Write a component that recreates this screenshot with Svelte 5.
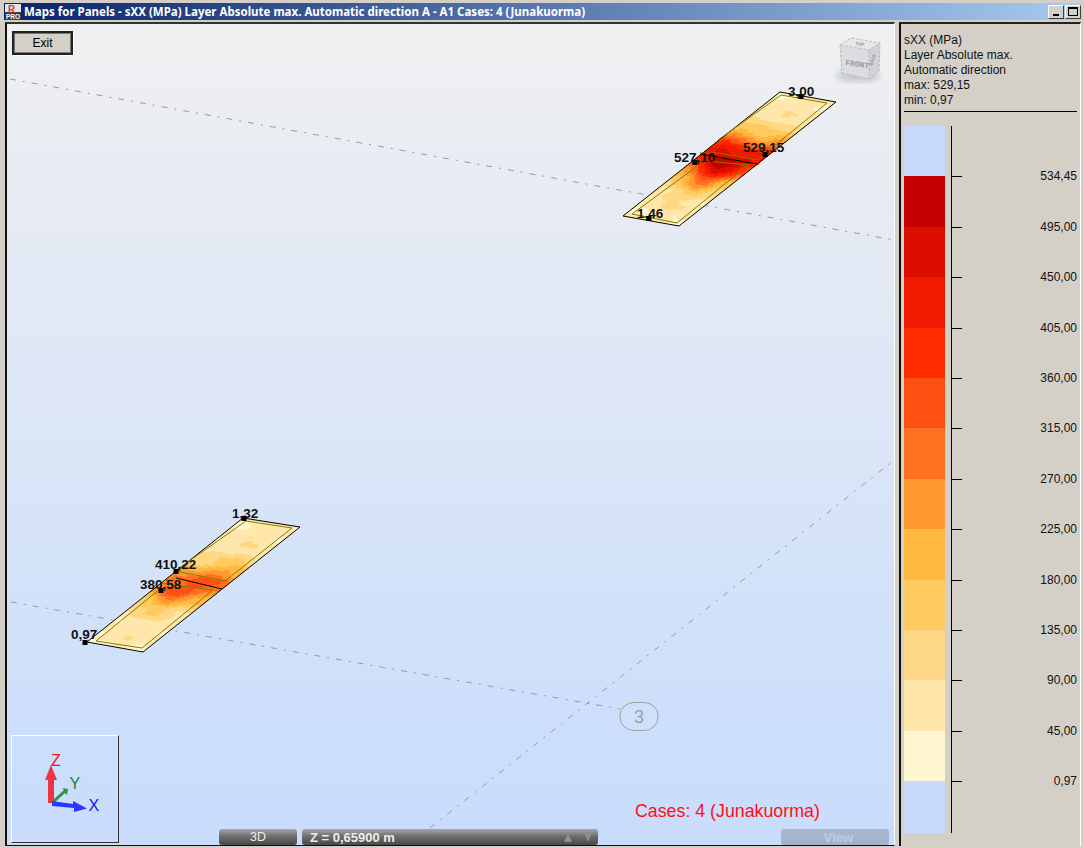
<script>
  const palette = ['#fff6d2','#ffe7ab','#ffd885','#ffca60','#ffb840','#ff9830','#ff7020','#ff5014','#ff2c00','#f21a00','#dd0e00','#c40000'];
  const legend = [
    { color: '#c8dafa', label: '' },
    { color: '#c40000', label: '534,45' },
    { color: '#dd0e00', label: '495,00' },
    { color: '#f21a00', label: '450,00' },
    { color: '#ff2c00', label: '405,00' },
    { color: '#ff5014', label: '360,00' },
    { color: '#ff7020', label: '315,00' },
    { color: '#ff9830', label: '270,00' },
    { color: '#ffb840', label: '225,00' },
    { color: '#ffca60', label: '180,00' },
    { color: '#ffd885', label: '135,00' },
    { color: '#ffe7ab', label: '90,00' },
    { color: '#fff6d2', label: '45,00' },
    { color: '#c8dafa', label: '0,97' }
  ];

  function plate(A, B, C, peak, width, base, seed) {
    const nu = 64, nv = 20, cells = [];
    const pt = (u, v) => [A[0] + u * (B[0] - A[0]) + v * (C[0] - A[0]), A[1] + u * (B[1] - A[1]) + v * (C[1] - A[1])];
    for (let i = 0; i < nu; i++) {
      for (let j = 0; j < nv; j++) {
        const u = (i + 0.5) / nu, v = (j + 0.5) / nv;
        const noise = 0.024 * Math.sin(u * 41 + v * 2.5 + seed) + 0.016 * Math.sin(u * 67 - v * 4 + seed * 2) + 0.008 * Math.sin(u * 23 + v * 13);
        const center = 0.5 + 0.03 * Math.sin(v * 6.28 + seed);
        const d = (u - center) / width;
        const edge = 0.06 * (1 - Math.abs(2 * v - 1));
        const ends = 0.05 * Math.sin(Math.PI * u);
        const x = base + edge + ends + noise + peak * Math.exp(-d * d) * (0.82 + 0.18 * Math.sin(Math.PI * v));
        const level = Math.max(0, Math.min(11, Math.floor(x * 12)));
        const p = [pt(i / nu, j / nv), pt((i + 1) / nu, j / nv), pt((i + 1) / nu, (j + 1) / nv), pt(i / nu, (j + 1) / nv)];
        cells.push({ points: p.map((q) => q.map((n) => n.toFixed(1)).join(',')).join(' '), fill: palette[level] });
      }
    }
    return cells;
  }

  const upper = plate([623, 216], [780, 92], [679, 226], 0.78, 0.18, 0.07, 1.3);
  const lower = plate([87, 642], [243, 518], [143, 652], 0.47, 0.16, 0.07, 2.7);

  const labels = [
    { x: 788, y: 96, t: '3,00' }, { x: 674, y: 162, t: '527,10' }, { x: 743, y: 152, t: '529,15' }, { x: 637, y: 218, t: '1,46' },
    { x: 232, y: 518, t: '1,32' }, { x: 155, y: 569, t: '410,22' }, { x: 140, y: 589, t: '380,58' }, { x: 71, y: 639, t: '0,97' }
  ];
  const marks = [[801, 96], [695, 162], [765, 154], [649, 218], [244, 518], [176, 571], [161, 590], [85, 642]];
</script>

<div class="window">
  <header class="titlebar">
    <svg class="appicon" viewBox="0 0 16 16" width="16" height="16" aria-hidden="true">
      <rect width="16" height="16" fill="#e4e6ee"/>
      <rect x="0" y="8" width="16" height="8" fill="#3c3c44"/>
      <text x="3" y="8.5" class="ico-r">R</text>
      <text x="1" y="15" class="ico-p">PRO</text>
    </svg>
    <span class="title">Maps for Panels - sXX (MPa) Layer Absolute max. Automatic direction A - A1 Cases: 4 (Junakuorma)</span>
    <div class="winbtns">
      <button class="winbtn" aria-label="Minimize"><i class="min"></i></button>
      <button class="winbtn" aria-label="Maximize"><i class="max"></i></button>
    </div>
  </header>

  <main class="body">
    <section class="viewport">
      <svg class="scene" viewBox="7 24 887 821" width="887" height="821">
        <defs>
          <filter id="blur"><feGaussianBlur stdDeviation="3"/></filter>
        </defs>
        <g class="grid">
          <line x1="10" y1="79" x2="894" y2="240"/>
          <line x1="11" y1="602" x2="620" y2="709"/>
          <line x1="430" y1="828" x2="893" y2="461"/>
        </g>
        <rect x="620" y="702.5" width="38" height="28" rx="14" ry="13" fill="#cfe0fb" stroke="#a0a09c"/>
        <text x="639" y="723" class="bubble">3</text>

        <g shape-rendering="crispEdges">
          {#each upper as c}<polygon points={c.points} fill={c.fill} stroke={c.fill} stroke-width="0.6"/>{/each}
          {#each lower as c}<polygon points={c.points} fill={c.fill} stroke={c.fill} stroke-width="0.6"/>{/each}
        </g>

        <polygon class="outline" points="780,92 836,102 679,226 623,216"/>
        <polyline class="inner" points="718,140 781,95 827,103 757,160 718,153 700,153"/>
        <polyline class="inner" points="696,167 632,214 677,223 748,165 696,160"/>
        <line class="centre" x1="700" y1="154" x2="757" y2="164"/>

        <polygon class="outline" points="243,518 300,527 143,652 87,642"/>
        <polyline class="inner" points="175,571 246,521 292,528 225,581 175,571"/>
        <polyline class="inner" points="160,589 96,641 142,648 213,590 160,583"/>
        <line class="centre" x1="176" y1="578" x2="222" y2="589"/>

        {#each marks as m}<rect x={m[0] - 2.5} y={m[1] - 2} width="5" height="5" fill="#000"/>{/each}
        {#each labels as l}<text x={l.x} y={l.y} class="value">{l.t}</text>{/each}

        <g class="cube">
          <ellipse cx="858" cy="76" rx="22" ry="6" fill="#c4c8ce" filter="url(#blur)"/>
          <polygon points="840,45 851,38 880,43 869,50" fill="#e6e7ea"/>
          <polygon points="840,45 869,50 869,79 842,73" fill="#dcdde0"/>
          <polygon points="869,50 880,43 879,71 869,79" fill="#d2d3d7"/>
          <polyline points="840,45 851,38 880,43 869,50 840,45 842,73 869,79 879,71 880,43" fill="none" stroke="#b9babd" stroke-dasharray="3 1.5"/>
          <line x1="869" y1="50" x2="869" y2="79" stroke="#b9babd" stroke-dasharray="3 1.5"/>
          <text x="845" y="65" class="front" transform="rotate(8 845 65)">FRONT</text>
          <text x="872" y="66" class="side" transform="rotate(-70 872 66)">BACK</text>
          <text x="855" y="45" class="side" transform="rotate(8 855 45)">TOP</text>
        </g>

        <text x="635" y="817" class="cases">Cases: 4 (Junakuorma)</text>
      </svg>

      <button class="exit">Exit</button>

      <div class="gizmo">
        <svg viewBox="12 736 106 106" width="106" height="106">
          <polygon points="48,803 48,780 45,780 51,765 57,780 54,780 54,803" fill="#f03442"/>
          <polygon points="53,804 52,801 64,790 62,788 68,789 67,795 65,793" fill="#2f9440"/>
          <polygon points="52,801 73,804 73,801 87,808.5 74,812 74,808 52,806" fill="#2a38ff"/>
          <text x="51" y="765.5" class="gz" fill="#ff1010">Z</text>
          <text x="69.5" y="789" class="gz" fill="#108a30">Y</text>
          <text x="88.5" y="810.5" class="gz" fill="#1018ff">X</text>
        </svg>
      </div>

      <div class="toolbar">
        <button class="bar b3d">3D</button>
        <div class="bar bz">
          <span>Z = 0,65900 m</span>
          <i class="tri up"></i>
          <i class="tri down"></i>
        </div>
        <button class="bar bview">View</button>
      </div>
    </section>

    <aside class="panel">
      <div class="info">
        <div>sXX (MPa)</div>
        <div>Layer Absolute max.</div>
        <div>Automatic direction</div>
        <div>max: 529,15</div>
        <div>min: 0,97</div>
      </div>
      <div class="legend">
        {#each legend as row, i}
          <div class="row">
            <span class="swatch" style:background={row.color}></span>
            <span class="axis">{#if i > 0}<i class="tick"></i>{/if}</span>
            <span class="lab">{row.label}</span>
          </div>
        {/each}
      </div>
    </aside>
  </main>
</div>

<style>
  :global(body) { margin: 0; background: #d4d0c8; overflow: hidden; }
  .window { width: 1084px; height: 848px; background: #d4d0c8; display: flex; flex-direction: column; box-sizing: border-box; font-family: "Liberation Sans", Arial, sans-serif; overflow: hidden; }

  .titlebar { height: 17px; margin: 3px 3px 0 4px; flex: none; display: flex; align-items: center; gap: 3px; padding: 0 0 0 1px; background: linear-gradient(90deg, #0a246a, #a6caf0); }
  .appicon { flex: none; }
  .ico-r { font: 700 10px "Liberation Sans", sans-serif; fill: #d8401c; }
  .ico-p { font: 700 6.5px "Liberation Sans", sans-serif; fill: #fff; }
  .title { font: 700 11.5px "Noto Sans", sans-serif; color: #fff; white-space: nowrap; flex: 1; }
  .winbtns { display: flex; gap: 1px; }
  .winbtn { width: 16px; height: 14px; padding: 0; background: #d4d0c8; border: 1px solid; border-color: #fff #404040 #404040 #fff; display: flex; align-items: center; justify-content: center; }
  .min { width: 6px; height: 2px; background: #000; margin-top: 6px; }
  .max { width: 10px; height: 9px; border: 1px solid #000; border-top-width: 2px; box-sizing: border-box; }

  .body { flex: 1; min-height: 0; display: flex; padding: 2px 2px 2px 5px; }
  .viewport { position: relative; width: 890px; flex: none; box-sizing: border-box; border-left: 2px solid #111; border-top: 2px solid #333; border-bottom: 1px solid #111; border-right: 1px solid #fff; background: linear-gradient(180deg, #f0f0f0 0%, #e6ebf3 22%, #d9e5f7 55%, #cbdefb 88%, #c9dcfb 100%); overflow: hidden; }
  .scene { position: absolute; left: 0; top: 0; }
  .grid line { stroke: #999; stroke-width: 1; stroke-dasharray: 6 7 2 7; fill: none; }
  .bubble { font: 18px "Liberation Sans", sans-serif; fill: #a0a09c; text-anchor: middle; }
  .outline { fill: none; stroke: #000; stroke-width: 1; }
  .inner { fill: none; stroke: #857a00; stroke-width: 1; }
  .centre { stroke: #000; stroke-width: 1; }
  .value { font: 700 13.5px "Liberation Sans", sans-serif; fill: #111; }
  .front { font: 700 8px "Liberation Mono", monospace; fill: #9a9b9e; }
  .side { font: 700 5px "Liberation Mono", monospace; fill: #9a9b9e; }
  .cases { font: 17.8px "Liberation Sans", sans-serif; fill: #ff0f14; }
  .gz { font: 16px "Liberation Sans", sans-serif; }

  .exit { position: absolute; left: 5px; top: 7px; width: 61px; height: 24px; box-sizing: border-box; background: #d4d0c8; border: 2px solid #222; box-shadow: inset 0 0 0 1px #777, 1px 1px 0 #fff; font: 12px "Liberation Sans", sans-serif; color: #000; padding: 0; }

  .gizmo { position: absolute; left: 4px; bottom: 2px; width: 108px; height: 108px; box-sizing: border-box; border: 1px solid; border-color: #fff #333 #333 #fff; }
  .gizmo svg { display: block; }

  .toolbar { position: absolute; left: 212px; bottom: 0; width: 670px; display: flex; gap: 5px; }
  .bar { height: 16px; box-sizing: border-box; border: 0; border-radius: 3px; background: linear-gradient(180deg, #a8a8a8 0%, #6e6e6e 45%, #484848 100%); color: #eee; font: 700 13px "Liberation Sans", sans-serif; display: flex; align-items: center; padding: 0; }
  .b3d { width: 78px; justify-content: center; font-weight: 400; font-size: 12.5px; }
  .bz { width: 296px; padding: 0 6px 0 8px; gap: 12px; }
  .bz span { flex: 1; }
  .tri { width: 0; height: 0; border-left: 4.5px solid transparent; border-right: 4.5px solid transparent; }
  .up { border-bottom: 9px solid #8e8e8e; }
  .down { border-top: 9px solid #8e8e8e; }
  .bview { margin-left: auto; width: 108px; justify-content: center; padding-left: 7px; background: linear-gradient(180deg, #a9b8cf, #a3b2c9); color: #c0cee2; }

  .panel { width: 182px; flex: none; margin-left: 4px; box-sizing: border-box; border-left: 2px solid #111; border-top: 2px solid #222; border-right: 1px solid #fff; padding: 9px 3px 0 3px; color: #111; font-size: 12px; }
  .info { line-height: 15px; height: 78px; border-bottom: 1px solid #000; }
  .info div { white-space: nowrap; }
  .legend { margin-top: 14px; display: flex; flex-direction: column; }
  .row { height: 50.4px; display: flex; }
  .row:last-child { height: 52px; }
  .swatch { width: 41px; flex: none; }
  .axis { width: 10px; margin-left: 6px; border-left: 1px solid #000; flex: none; }
  .tick { display: block; width: 10px; height: 1px; background: #000; }
  .lab { flex: 1; text-align: right; line-height: 14px; margin-top: -7px; }
</style>
